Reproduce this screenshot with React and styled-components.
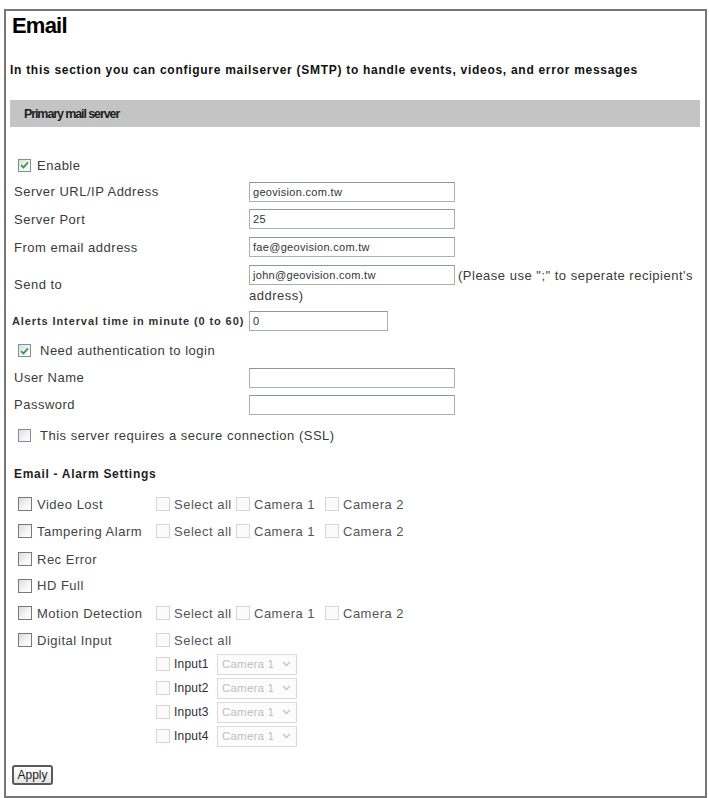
import React from "react";
import styled, { createGlobalStyle } from "styled-components";

const GlobalStyle = createGlobalStyle`
  html, body { margin: 0; background: #fff; }
  body {
    font-family: "Liberation Sans", Arial, sans-serif;
    color: #3a3a3a;
  }
`;

const Frame = styled.div`
  box-sizing: border-box;
  margin: 9px 2px 0 4px;
  height: 789px;
  border: 2px solid #767676;
  padding: 0 5px 0 4px;
`;

const Title = styled.h1`
  margin: 2px 0 0 2px;
  font-size: 22px;
  line-height: 26px;
  font-weight: bold;
  letter-spacing: -0.8px;
  color: #000;
`;

const Intro = styled.p`
  margin: 23px 0 0;
  font-size: 12px;
  line-height: 16px;
  font-weight: bold;
  letter-spacing: 0.72px;
  color: #111;
  white-space: nowrap;
`;

const SectionBar = styled.div`
  margin-top: 22px;
  height: 27px;
  background: #c4c4c4;
  display: flex;
  align-items: center;
  padding-left: 14px;
  font-size: 12.5px;
  font-weight: bold;
  letter-spacing: -1.1px;
  color: #1e1e1e;
`;

const Form = styled.div`
  padding-top: 25px;
  letter-spacing: 0.5px;
`;

const Row = styled.div`
  display: grid;
  grid-template-columns: 239px 1fr;
  align-items: center;
  height: ${({ h }) => (h ? `${h}px` : "auto")};
  padding: ${({ pad }) => pad || 0};
`;

const Label = styled.span`
  padding-left: 4px;
  font-size: 13px;
  white-space: nowrap;
`;

const SmallLabel = styled.span`
  padding-left: 2px;
  font-size: 11px;
  font-weight: bold;
  letter-spacing: 0.9px;
  color: #333;
  white-space: nowrap;
`;

const TextInput = styled.div`
  box-sizing: border-box;
  flex: none;
  width: ${({ w }) => w || 206}px;
  height: 20px;
  border: 1px solid #a9afb6;
  border-top-color: #8f959c;
  padding: 0 3px;
  display: flex;
  align-items: center;
  font-size: 11px;
  letter-spacing: 0.3px;
  color: #333;
  background: #fff;
`;

const CheckLine = styled.label`
  display: flex;
  align-items: center;
  gap: ${({ gap }) => gap || 6}px;
  padding-left: 8px;
  height: ${({ h }) => h}px;
  font-size: 13px;
  white-space: nowrap;
`;

const Box = styled.span`
  box-sizing: border-box;
  flex: none;
  display: inline-flex;
  align-items: center;
  justify-content: center;
  width: ${({ size }) => size || 13}px;
  height: ${({ size }) => size || 13}px;
  border: 1px solid
    ${({ tone }) =>
      tone === "faint" ? "#d6d6d6" : tone === "blue" ? "#7f8e9c" : "#787878"};
  background: ${({ tone }) =>
    tone === "faint"
      ? "#fbfbfb"
      : "linear-gradient(135deg, #dcdcdc 0%, #f6f6f6 60%, #ffffff 100%)"};
`;

const Check = ({ checked, tone, size }) => (
  <Box tone={tone} size={size}>
    {checked && (
      <svg width="9" height="8" viewBox="0 0 9 8">
        <path
          d="M1 4.2 L3.4 6.5 L8 1.3"
          fill="none"
          stroke="#2f9a3a"
          strokeWidth="1.8"
        />
      </svg>
    )}
  </Box>
);

const SendCell = styled.div`
  display: flex;
  flex-direction: column;
`;

const SendLine = styled.div`
  display: flex;
  align-items: center;
  gap: 3px;
  height: 22px;
  font-size: 13px;
  white-space: nowrap;
`;

const SendWrap = styled.div`
  margin-top: 2px;
  font-size: 13px;
  line-height: 16px;
`;

const Heading = styled.div`
  margin-top: 10px;
  height: 26px;
  display: flex;
  align-items: center;
  padding-left: 4px;
  font-size: 12px;
  font-weight: bold;
  letter-spacing: 0.7px;
  color: #1e1e1e;
`;

const AlarmRow = styled.div`
  display: grid;
  grid-template-columns: 146px 80px 89px auto;
  align-items: ${({ top }) => (top ? "start" : "center")};
  height: ${({ h }) => (h ? `${h}px` : "auto")};
  margin-top: ${({ mt }) => mt || 0}px;
`;

const AlarmMain = styled.label`
  display: flex;
  align-items: center;
  gap: 5px;
  padding-left: 8px;
  height: 24px;
  font-size: 13px;
  color: #444;
  white-space: nowrap;
`;

const Pick = styled.label`
  display: flex;
  align-items: center;
  gap: 4px;
  height: 24px;
  font-size: 13px;
  color: #555;
  white-space: nowrap;
`;

const InputStack = styled.div`
  grid-column: 2 / -1;
  display: flex;
  flex-direction: column;
`;

const InputName = styled.span`
  flex: none;
  width: 39px;
  font-size: 12px;
  letter-spacing: 0.2px;
  color: #2e2e2e;
`;

const Dropdown = styled.div`
  box-sizing: border-box;
  flex: none;
  width: 80px;
  height: 21px;
  border: 1px solid #dadada;
  display: flex;
  align-items: center;
  justify-content: space-between;
  padding: 0 5px 0 4px;
  font-size: 11.5px;
  letter-spacing: 0.2px;
  color: #bcbcbc;
  background: #fcfcfc;
`;

const ApplyButton = styled.button`
  margin: 17px 0 0 2px;
  box-sizing: border-box;
  width: 41px;
  height: 20px;
  padding: 0;
  border: 2px solid #5a5a5a;
  border-radius: 3px;
  background: linear-gradient(#ffffff, #e4e4e4);
  font-family: "Liberation Sans", Arial, sans-serif;
  font-size: 12px;
  color: #222;
`;

const cameraAlarms = ["Video Lost", "Tampering Alarm"];

const CameraPicks = () => (
  <>
    <Pick>
      <Check tone="faint" size={14} />
      Select all
    </Pick>
    <Pick>
      <Check tone="faint" size={14} />
      Camera 1
    </Pick>
    <Pick>
      <Check tone="faint" size={14} />
      Camera 2
    </Pick>
  </>
);

const Chevron = () => (
  <svg width="9" height="6" viewBox="0 0 9 6">
    <path d="M1 1 L4.5 4.5 L8 1" fill="none" stroke="#c4c4c4" strokeWidth="1.4" />
  </svg>
);

const App = () => {
  return (
    <>
      <GlobalStyle />
      <Frame>
        <Title>Email</Title>
        <Intro>
          In this section you can configure mailserver (SMTP) to handle events,
          videos, and error messages
        </Intro>
        <SectionBar>Primary mail server</SectionBar>

        <Form>
          <CheckLine h={26} gap={6}>
            <Check checked tone="blue" />
            Enable
          </CheckLine>
          <Row h={27}>
            <Label>Server URL/IP Address</Label>
            <TextInput>geovision.com.tw</TextInput>
          </Row>
          <Row h={28}>
            <Label>Server Port</Label>
            <TextInput>25</TextInput>
          </Row>
          <Row h={28}>
            <Label>From email address</Label>
            <TextInput>fae@geovision.com.tw</TextInput>
          </Row>
          <Row pad="3px 0 2px">
            <Label>Send to</Label>
            <SendCell>
              <SendLine>
                <TextInput>john@geovision.com.tw</TextInput>
                (Please use ";" to seperate recipient's
              </SendLine>
              <SendWrap>address)</SendWrap>
            </SendCell>
          </Row>
          <Row h={30}>
            <SmallLabel>Alerts Interval time in minute (0 to 60)</SmallLabel>
            <TextInput w={139}>0</TextInput>
          </Row>
          <CheckLine h={29} gap={9}>
            <Check checked tone="blue" />
            Need authentication to login
          </CheckLine>
          <Row h={25}>
            <Label>User Name</Label>
            <TextInput />
          </Row>
          <Row h={29}>
            <Label>Password</Label>
            <TextInput />
          </Row>
          <CheckLine h={32} gap={9}>
            <Check tone="blue" />
            This server requires a secure connection (SSL)
          </CheckLine>

          <Heading>Email - Alarm Settings</Heading>

          {cameraAlarms.map((name, i) => (
            <AlarmRow key={name} h={i === 0 ? 26 : 28} mt={i === 0 ? 4 : 0}>
              <AlarmMain>
                <Check size={14} />
                {name}
              </AlarmMain>
              <CameraPicks />
            </AlarmRow>
          ))}
          <AlarmRow h={28}>
            <AlarmMain>
              <Check size={14} />
              Rec Error
            </AlarmMain>
          </AlarmRow>
          <AlarmRow h={25}>
            <AlarmMain>
              <Check size={14} />
              HD Full
            </AlarmMain>
          </AlarmRow>
          <AlarmRow h={30}>
            <AlarmMain>
              <Check size={14} />
              Motion Detection
            </AlarmMain>
            <CameraPicks />
          </AlarmRow>
          <AlarmRow top>
            <AlarmMain>
              <Check size={14} />
              Digital Input
            </AlarmMain>
            <InputStack>
              <Pick>
                <Check tone="faint" size={14} />
                Select all
              </Pick>
              {[1, 2, 3, 4].map((n) => (
                <Pick key={n}>
                  <Check tone="faint" size={14} />
                  <InputName>Input{n}</InputName>
                  <Dropdown>
                    Camera 1
                    <Chevron />
                  </Dropdown>
                </Pick>
              ))}
            </InputStack>
          </AlarmRow>

          <ApplyButton>Apply</ApplyButton>
        </Form>
      </Frame>
    </>
  );
};

export default App;
